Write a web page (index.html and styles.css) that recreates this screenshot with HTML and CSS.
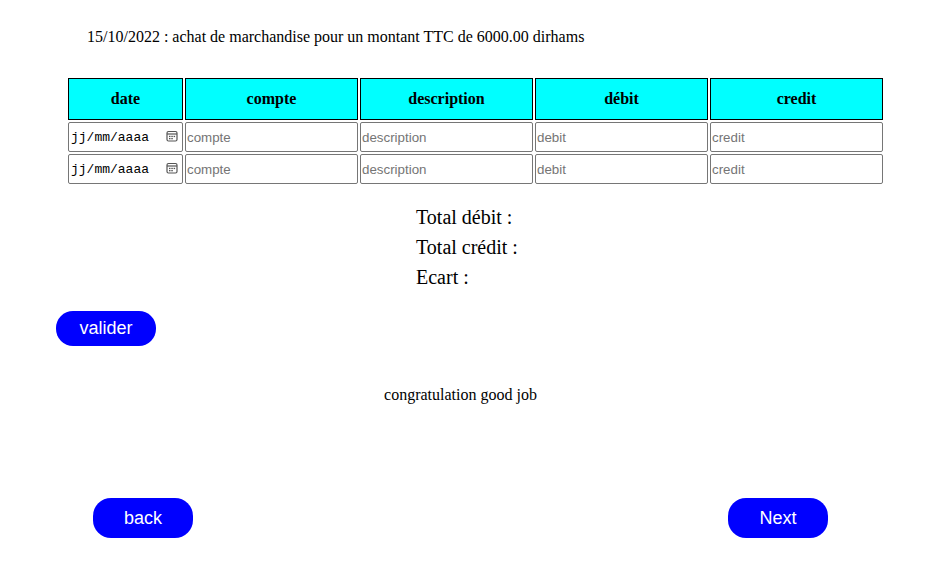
FILE: index.html
```html
<!DOCTYPE html>
<html lang="fr">
<head>
<meta charset="utf-8">
<title>Journal</title>
<link rel="stylesheet" href="styles.css">
</head>
<body>
<main class="page">
  <p class="statement">15/10/2022 : achat de marchandise pour un montant TTC de 6000.00 dirhams</p>
  <table class="journal">
    <thead>
      <tr>
        <th class="col-date">date</th>
        <th class="col">compte</th>
        <th class="col">description</th>
        <th class="col">débit</th>
        <th class="col">credit</th>
      </tr>
    </thead>
    <tbody>
      <tr>
        <td><div class="date-field"><span>jj/mm/aaaa</span><svg class="cal" width="12" height="12" viewBox="0 0 12 12"><rect x="1" y="1.5" width="10" height="9.5" rx="1.5" fill="none" stroke="#555" stroke-width="1.2"/><line x1="1" y1="4" x2="11" y2="4" stroke="#555" stroke-width="1.2"/><rect x="3" y="5.8" width="1.5" height="1.3" fill="#555"/><rect x="5.3" y="5.8" width="1.5" height="1.3" fill="#555"/><rect x="7.6" y="5.8" width="1.5" height="1.3" fill="#555"/><rect x="3" y="8" width="1.5" height="1.3" fill="#555"/><rect x="5.3" y="8" width="1.5" height="1.3" fill="#555"/></svg></div></td>
        <td><input class="field" type="text" placeholder="compte"></td>
        <td><input class="field" type="text" placeholder="description"></td>
        <td><input class="field" type="text" placeholder="debit"></td>
        <td><input class="field" type="text" placeholder="credit"></td>
      </tr>
      <tr>
        <td><div class="date-field"><span>jj/mm/aaaa</span><svg class="cal" width="12" height="12" viewBox="0 0 12 12"><rect x="1" y="1.5" width="10" height="9.5" rx="1.5" fill="none" stroke="#555" stroke-width="1.2"/><line x1="1" y1="4" x2="11" y2="4" stroke="#555" stroke-width="1.2"/><rect x="3" y="5.8" width="1.5" height="1.3" fill="#555"/><rect x="5.3" y="5.8" width="1.5" height="1.3" fill="#555"/><rect x="7.6" y="5.8" width="1.5" height="1.3" fill="#555"/><rect x="3" y="8" width="1.5" height="1.3" fill="#555"/><rect x="5.3" y="8" width="1.5" height="1.3" fill="#555"/></svg></div></td>
        <td><input class="field" type="text" placeholder="compte"></td>
        <td><input class="field" type="text" placeholder="description"></td>
        <td><input class="field" type="text" placeholder="debit"></td>
        <td><input class="field" type="text" placeholder="credit"></td>
      </tr>
    </tbody>
  </table>
  <div class="totals">
    <div class="total-line">Total débit :</div>
    <div class="total-line">Total crédit :</div>
    <div class="total-line">Ecart :</div>
  </div>
  <button class="btn btn-validate">valider</button>
  <p class="message">congratulation good job</p>
  <div class="nav">
    <button class="btn btn-nav">back</button>
    <button class="btn btn-nav">Next</button>
  </div>
</main>
</body>
</html>
```
FILE: styles.css
```css
html, body {
  margin: 0;
  padding: 0;
  background: #fff;
}
body {
  font-family: "Liberation Serif", "Times New Roman", serif;
  font-size: 16px;
  color: #000;
}
.page {
  width: 927px;
  display: flex;
  flex-direction: column;
  align-items: flex-start;
}
.statement {
  margin: 28px 0 0 87px;
  line-height: 18px;
}
.journal {
  margin: 30px 0 0 66px;
  border-collapse: separate;
  border-spacing: 2px;
  table-layout: fixed;
  width: 819px;
}
.journal th {
  background: #00ffff;
  border: 1px solid #000;
  height: 42px;
  box-sizing: border-box;
  padding: 0;
  font-weight: bold;
  font-size: 16px;
}
.col-date { width: 115px; }
.col { width: 173px; }
.journal td {
  padding: 0;
  height: 30px;
}
.field, .date-field {
  display: block;
  box-sizing: border-box;
  width: 100%;
  height: 30px;
  margin: 0;
  padding: 1px 1px;
  border: 1px solid #767676;
  border-radius: 2px;
  background: #fff;
  font-family: "Liberation Sans", Arial, sans-serif;
  font-size: 13.33px;
  color: #000;
  outline: none;
}
.field::placeholder {
  color: #757575;
}
.date-field {
  display: flex;
  align-items: center;
  justify-content: space-between;
  padding: 0 4px 0 2px;
  font-family: "Liberation Mono", "DejaVu Sans Mono", monospace;
  font-size: 13px;
}
.cal {
  flex: none;
  margin-top: -2px;
}
.totals {
  margin: 16px 0 0 416px;
  font-size: 20px;
}
.total-line {
  line-height: 30px;
  height: 30px;
}
.btn {
  border: none;
  background: #0000ff;
  color: #fff;
  font-family: "Liberation Sans", Arial, sans-serif;
  font-size: 18px;
  width: 100px;
  padding: 0;
  cursor: pointer;
}
.btn-validate {
  margin: 19px 0 0 56px;
  height: 35px;
  border-radius: 17px;
}
.message {
  align-self: stretch;
  text-align: center;
  margin: 40px 6px 0 0;
  line-height: 18px;
}
.nav {
  align-self: stretch;
  display: flex;
  justify-content: space-between;
  margin: 94px 99px 0 93px;
}
.btn-nav {
  height: 40px;
  border-radius: 18px;
}
```
